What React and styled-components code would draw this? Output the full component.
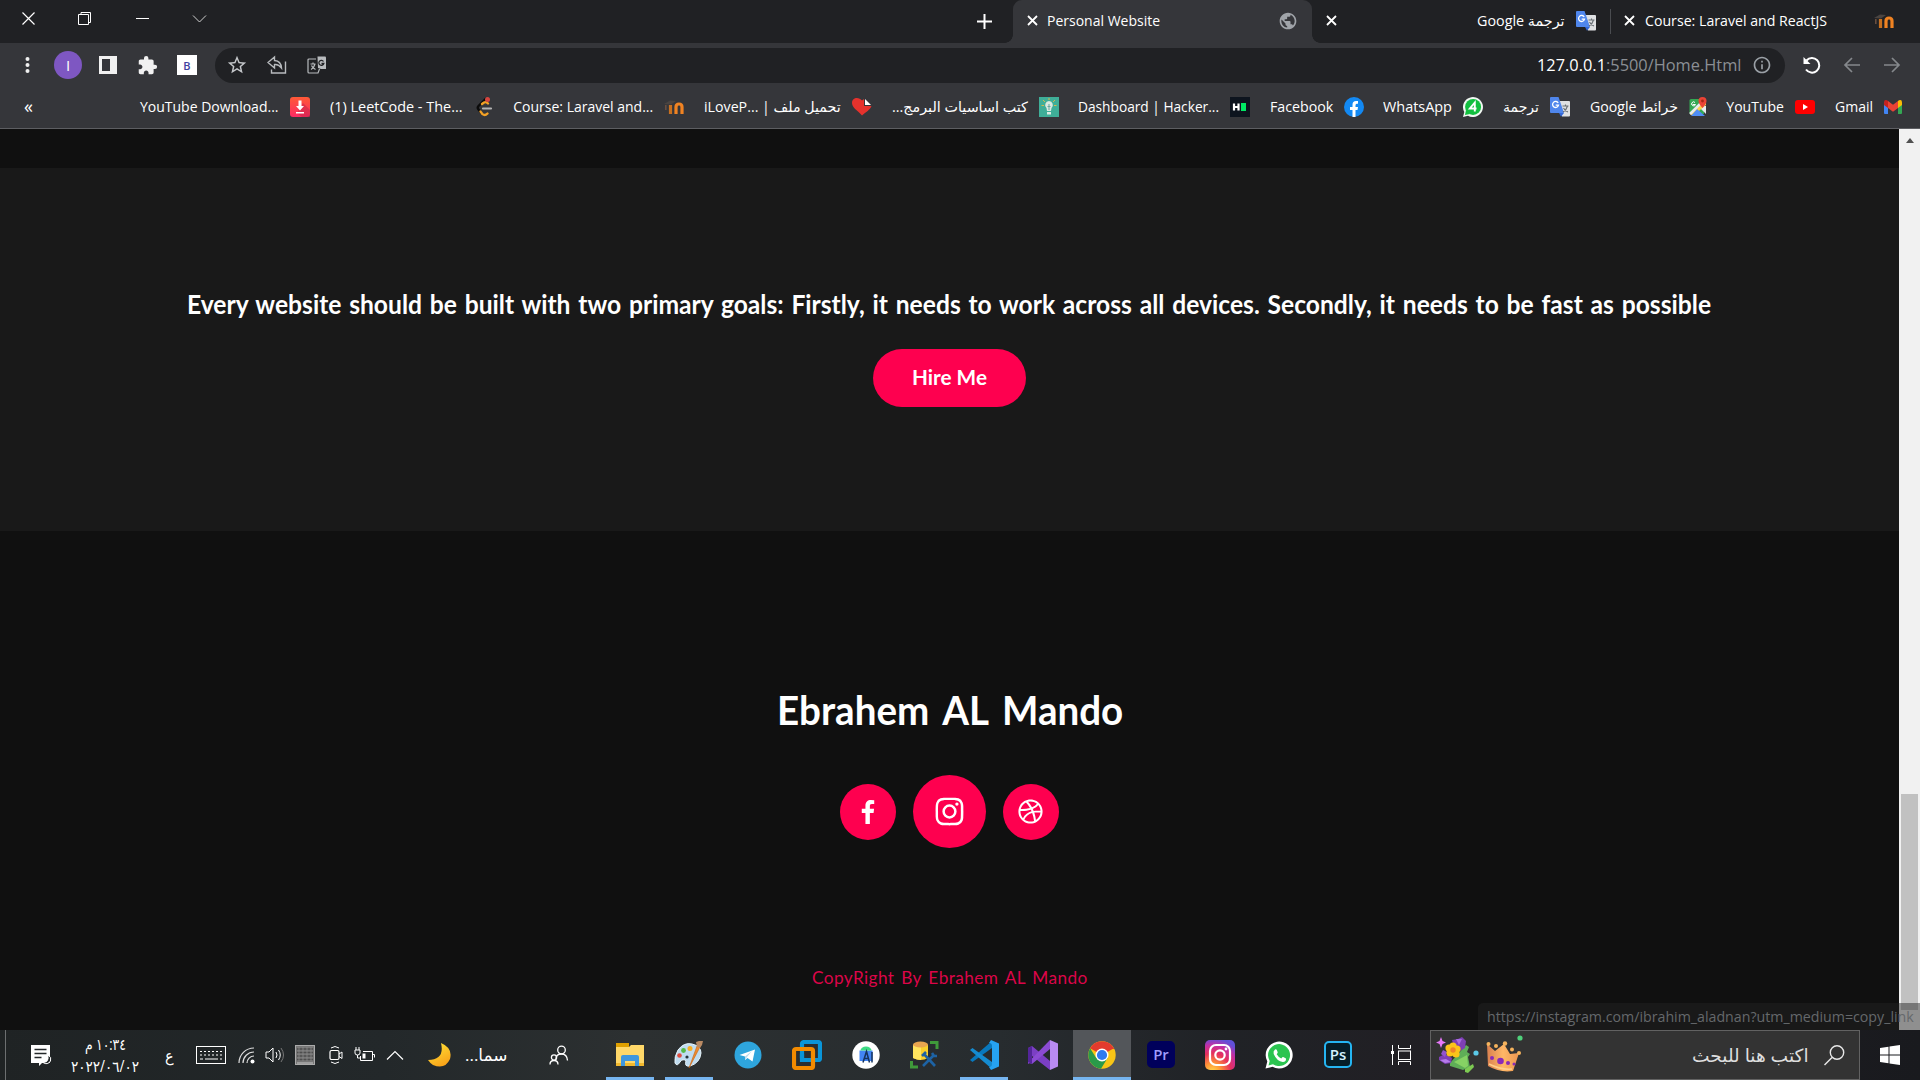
import React, { useLayoutEffect, useRef, useState } from "react";
import styled, { createGlobalStyle, css } from "styled-components";
import { BiLogoFacebook, BiLogoInstagram, BiLogoDribbble } from "react-icons/bi";
import { MdStarBorder, MdExtension, MdInfoOutline, MdPublic } from "react-icons/md";

const GlobalStyle = createGlobalStyle`
  * { box-sizing: border-box; }
  html, body { margin: 0; padding: 0; overflow: hidden; background: #101010; }
  svg { display: block; flex: none; }
`;

const ui = `"Open Sans", "Noto Sans", "DejaVu Sans", sans-serif`;
const brand = `Lato, "Open Sans", sans-serif`;

/* ---------- text that fills a known width ---------- */
const FitBox = styled.span`
  display: block;
  flex: none;
  width: ${(p) => p.$w}px;
  direction: ltr;
  white-space: nowrap;
`;
const FitInner = styled.span`
  display: inline-block;
  transform-origin: 0 50%;
`;
function Fit({ w, rtl, children }) {
  const ref = useRef(null);
  const [scale, setScale] = useState(1);
  useLayoutEffect(() => {
    if (ref.current) setScale(w / ref.current.offsetWidth);
  }, [w]);
  return (
    <FitBox $w={w}>
      <FitInner ref={ref} dir={rtl ? "rtl" : "ltr"} style={{ transform: `scaleX(${scale})` }}>
        {children}
      </FitInner>
    </FitBox>
  );
}

/* ---------- frame ---------- */
const Screen = styled.div`
  width: 1920px;
  height: 1080px;
  display: flex;
  flex-direction: column;
  overflow: hidden;
  font-family: ${ui};
  color: #fff;
`;
const TabStrip = styled.header`
  height: 43px;
  flex: none;
  display: flex;
  background: #202124;
`;
const WindowButtons = styled.div`
  width: 1005px;
  height: 43px;
  display: flex;
  align-items: center;
  padding-left: 21px;
`;
const WinIcon = styled.span`
  width: 15px;
  margin: 0 ${(p) => p.$mr}px 6px 0;
`;
const NewTab = styled.span`
  margin-left: auto;
  margin-right: 13px;
`;
const Tab = styled.div`
  height: 43px;
  width: ${(p) => p.$w}px;
  flex: none;
  display: flex;
  align-items: center;
  padding: 0 ${(p) => p.$pr}px 2px ${(p) => p.$pl}px;
  font-size: 14px;
  line-height: 20px;
  ${(p) =>
    p.$active &&
    css`
      background: #35363a;
      border-radius: 9px 9px 0 0;
    `}
`;
const TabCurve = styled.span`
  width: 8px;
  height: 8px;
  align-self: flex-end;
  flex: none;
  background: radial-gradient(circle at ${(p) => (p.$right ? "100% 0" : "0 0")}, #202124 7.5px, #35363a 8px);
`;
const TabTitle = styled.span`
  margin-left: ${(p) => p.$ml}px;
  margin-right: auto;
`;
const TabRule = styled.span`
  width: 1px;
  height: 25px;
  margin-top: 9px;
  background: #4a4c50;
  flex: none;
`;

const Toolbar = styled.div`
  height: 44px;
  flex: none;
  display: flex;
  align-items: center;
  padding-left: 24px;
  background: #35363a;
`;
const Tools = styled.div`
  width: 191px;
  display: flex;
  align-items: center;
`;
const Tool = styled.span`
  margin-right: ${(p) => p.$mr || 0}px;
  display: flex;
`;
const Avatar = styled.span`
  width: 28px;
  height: 28px;
  margin: 0 17px 0 23px;
  border-radius: 50%;
  background: #7e57c2;
  display: grid;
  place-items: center;
  font-size: 15px;
`;
const BBadge = styled.span`
  width: 20px;
  height: 20px;
  margin-left: 1px;
  background: #fff;
  color: #3f3f9f;
  display: grid;
  place-items: center;
  font-size: 11px;
  font-weight: 600;
`;
const Address = styled.div`
  width: 1570px;
  height: 35px;
  border-radius: 18px;
  background: #202124;
  display: flex;
  align-items: center;
  padding: 0 13px 0 11px;
  color: #c4c7ca;
  font-size: 17px;
  line-height: 24px;
`;
const Url = styled.span`
  margin-left: auto;
  margin-right: 11px;
  color: #8b8f94;
  b { color: #fff; font-weight: 400; }
`;
const NavIcons = styled.div`
  display: flex;
  align-items: center;
  gap: 20px;
  margin-left: 17px;
`;

const Bookmarks = styled.nav`
  height: 42px;
  flex: none;
  display: flex;
  align-items: center;
  justify-content: flex-end;
  gap: 19.65px;
  padding: 0 18px 2px 24px;
  background: #35363a;
  border-bottom: 1px solid #5d5e62;
  font-size: 14px;
  line-height: 20px;
`;
const More = styled.span`
  margin-right: auto;
  font-size: 18px;
  line-height: 20px;
  padding-bottom: 2px;
`;
const Bookmark = styled.span`
  display: flex;
  align-items: center;
  gap: 11px;
`;

/* ---------- page ---------- */
const Viewport = styled.div`
  position: relative;
  flex: 1;
  min-height: 0;
  display: flex;
  background: #101010;
`;
const Page = styled.main`
  width: 1899px;
  display: flex;
  flex-direction: column;
  font-family: ${brand};
`;
const Hire = styled.section`
  margin-top: 39px;
  height: 363px;
  flex: none;
  padding-top: 116px;
  background: #191919;
  display: flex;
  flex-direction: column;
  align-items: center;
`;
const Pitch = styled.h2`
  margin: 0 2px 0 0;
  font-size: 27.5px;
  line-height: 40px;
  font-weight: 700;
  word-spacing: 2px;
`;
const HireButton = styled.a`
  margin-top: 25px;
  width: 153px;
  height: 58px;
  border-radius: 30px;
  background: #fe004f;
  display: flex;
  align-items: center;
  justify-content: center;
  padding-bottom: 2px;
  font-size: 21px;
  line-height: 30px;
  font-weight: 700;
`;
const Footer = styled.footer`
  flex: 1;
  padding-top: 151px;
  display: flex;
  flex-direction: column;
  align-items: center;
`;
const Name = styled.h1`
  margin: 0;
  font-size: 40px;
  line-height: 56px;
  font-weight: 700;
  word-spacing: 5px;
`;
const Socials = styled.div`
  margin: 37px 1px 0 0;
  height: 73px;
  display: flex;
  align-items: center;
  gap: 17px;
`;
const Social = styled.a`
  width: ${(p) => p.$size}px;
  height: ${(p) => p.$size}px;
  border-radius: 50%;
  background: #fe004f;
  display: grid;
  place-items: center;
`;
const Copyright = styled.p`
  margin: 116px 0 0;
  font-size: 17px;
  line-height: 28px;
  letter-spacing: 0.4px;
  word-spacing: 2px;
  color: #dc0549;
`;
const Scrollbar = styled.div`
  width: 21px;
  background: #f1f1f1;
  display: flex;
  flex-direction: column;
  align-items: center;
`;
const Arrow = styled.span`
  margin-top: 9px;
  border: 4.5px solid transparent;
  border-top: 0;
  border-bottom: 5px solid #505050;
`;
const Thumb = styled.span`
  width: 17px;
  height: 216px;
  margin-top: 651px;
  background: #c1c1c1;
`;
const Status = styled.div`
  position: absolute;
  right: 0;
  bottom: 0;
  width: 442px;
  height: 27px;
  padding-left: 9px;
  border-top-left-radius: 5px;
  background: rgba(35, 35, 36, 0.48);
  color: #65686b;
  font-size: 14px;
  line-height: 27px;
  overflow: hidden;
`;

/* ---------- taskbar ---------- */
const Taskbar = styled.footer`
  height: 50px;
  flex: none;
  display: flex;
  align-items: center;
  background: linear-gradient(90deg, #1f2324 0, #23282a 20%, #2c3031 33%, #272c2f 52%, #202226 64%, #211f24 75%, #191a1e 100%);
`;
const Tray = styled.div`
  width: 601px;
  height: 50px;
  margin-left: 5px;
  margin-right: -5px;
  padding-left: 25px;
  border-left: 1px solid #6c6f70;
  display: flex;
  align-items: center;
`;
const TrayItem = styled.span`
  margin-left: ${(p) => p.$ml || 0}px;
  font-size: ${(p) => p.$fs || 15}px;
  line-height: 24px;
`;
const Clock = styled.div`
  margin-left: 19px;
  width: 68px;
  display: flex;
  flex-direction: column;
  align-items: center;
  font-size: 15.5px;
  line-height: 22px;
`;
const Apps = styled.div`
  display: flex;
  gap: 1px;
  width: 829px;
`;
const AppCell = styled.span`
  width: 58px;
  height: 50px;
  flex: none;
  display: flex;
  align-items: center;
  justify-content: center;
  padding-top: ${(p) => (p.$active ? 3 : 0)}px;
  padding-left: ${(p) => p.$shift || 0}px;
  background: ${(p) => (p.$active ? "#53565a" : "transparent")};
  border-bottom: ${(p) => (p.$active ? "3px solid #76b5f0" : "0")};
  ${(p) =>
    p.$open &&
    !p.$active &&
    css`
      background: linear-gradient(#76b5f0, #76b5f0) center bottom / 48px 3px no-repeat;
    `}
`;
const Tile = styled.span`
  width: 28px;
  height: 27px;
  border-radius: 5px;
  border: 2px solid ${(p) => p.$edge};
  background: ${(p) => p.$bg};
  color: ${(p) => p.$fg};
  display: grid;
  place-items: center;
  font: 600 15px/20px ${ui};
  margin-bottom: 2px;
`;
const Search = styled.div`
  width: 430px;
  height: 50px;
  border: 1px solid #626262;
  background: #333;
  display: flex;
  align-items: center;
  padding: 0 14px 0 4px;
  font-size: 18px;
  line-height: 26px;
  color: #dedede;
`;
const SearchText = styled.span`
  margin-left: auto;
  margin-right: 15px;
`;
const Start = styled.span`
  margin-left: 20px;
`;

/* ---------- drawings ---------- */
const Svg = ({ w = 20, h = w, vb = `0 0 ${w} ${h}`, children }) => (
  <svg width={w} height={h} viewBox={vb} fill="none" stroke="none">{children}</svg>
);
const CloseX = () => (
  <Svg w={11}><path d="M1 1l9 9M10 1l-9 9" stroke="#fff" strokeWidth="1.800" /></Svg>
);
const Moodle = () => (
  <Svg w={20}>
    <path d="M12 17V10q0-3 3-3t3 3v7" stroke="#f08322" strokeWidth="3.200" />
    <path d="M6.500 17V8" stroke="#c8701f" strokeWidth="3.200" />
    <path d="M0 7l6-3.500 6 .5-5 3.500z" fill="#4a4441" /><path d="M1.800 8v5" stroke="#6e5140" strokeWidth="1.500" />
  </Svg>
);
const Translate = () => (
  <Svg w={20}>
    <path d="M8 4h11q1 0 1 1v13.500q0 1-1 1h-7z" fill="#dfe1e3" />
    <path d="M1 0h7.500L14 16H1q-1 0-1-1V1q0-1 1-1z" fill="#4f86ec" />
    <path d="M9 16h5l-3 3.800z" fill="#3367d6" />
    <path d="M8.200 6A3 3 0 1 0 8.500 8.200H5.700" stroke="#fff" strokeWidth="1.300" />
    <path d="M12.500 9h6M15.500 7.500V9M17.500 9q-1 4-4.500 6M13.500 11q1.500 3 4.500 4" stroke="#6a7075" strokeWidth="1.100" />
  </Svg>
);
const Download = () => (
  <Svg w={20}>
    <defs><linearGradient id="dl" x2="0" y2="1"><stop stopColor="#ff5a36" /><stop offset="1" stopColor="#fb2a63" /></linearGradient></defs>
    <rect width="20" height="20" rx="3" fill="url(#dl)" />
    <path d="M13 6l7 7v7h-8l-5-4z" fill="#c92748" opacity=".55" />
    <path d="M8.500 3.500h3V9H14l-4 4.500L6 9h2.500zM6 15h8v1.500H6z" fill="#fff" />
  </Svg>
);
const Leet = () => (
  <Svg w={20}>
    <path d="M11.500 2L4.500 9q-1.500 1.800 0 3.500l2.500 3" stroke="#0b0b0b" strokeWidth="2.400" strokeLinecap="round" />
    <path d="M6.500 14.500l2 2.700q2.500 2 5-.7M8 7l2-1.500q2-1 4 1" stroke="#f3a125" strokeWidth="2.300" strokeLinecap="round" />
    <path d="M9 11.500h8" stroke="#b3b3b3" strokeWidth="2.200" strokeLinecap="round" /><circle cx="13.500" cy="2.500" r="2.500" fill="#d6453f" />
  </Svg>
);
const LovePdf = () => (
  <Svg w={20}>
    <path d="M10 18.500C5 13 0 10.500 0 6 0 0 7-.5 10 3.500L12 2v7h7.500C18 13 14 15 10 18.500z" fill="#e5322d" /><path d="M13 2l6 6h-6z" fill="#fff" />
  </Svg>
);
const Bulb = () => (
  <Svg w={20}>
    <rect width="20" height="20" fill="#3fae98" /><path d="M4 3l2 2M16 3l-2 2M2.500 8.500H5M15 8.500h2.500M10 1v2" stroke="#d5b84e" />
    <path d="M10 4a4 4 0 0 1 2.500 7L12 14H8l-.5-3A4 4 0 0 1 10 4zM8 15h4v2.500H8z" fill="#dce9e1" /><path d="M10 7v6M8.500 9.500H11.500" stroke="#65a7a2" />
  </Svg>
);
const Hacker = () => (
  <Svg w={20}>
    <rect width="20" height="20" fill="#0d141e" /><path d="M4 6.500v7M8.500 6.500v7M4 10h4.500" stroke="#fff" strokeWidth="2.200" />
    <rect x="11" y="6" width="5" height="8" fill="#00ea64" />
  </Svg>
);
const Facebook = () => (
  <Svg w={20}>
    <circle cx="10" cy="10" r="10" fill="#1389f3" /><path d="M8.500 20v-7H6v-3h2.500V7.700Q8.500 4 12 4h2v2.700h-1.300q-1.200 0-1.200 1.500V10h2.500l-.5 3h-2v7z" fill="#fff" />
  </Svg>
);
const Wa4 = () => (
  <Svg w={20}>
    <path d="M0 20l1.300-5A10 10 0 1 1 5 18.700z" fill="#f2f7f3" /><circle cx="10.100" cy="9.900" r="8" fill="#12bf3f" /><path d="M3 13l-1 5 5-1z" fill="#12bf3f" />
    <path d="M11.800 14.500V5.500L6.800 11.500h6.700" stroke="#fff" strokeWidth="1.900" />
  </Svg>
);
const Maps = () => (
  <Svg w={18} h={20}>
    <path d="M2 2h13v15H2q-1.500 0-1.500-1.500v-12Q.5 2 2 2z" fill="#34a853" /><path d="M17 9v8L9 9z" fill="#e8eaed" />
    <path d="M1 17L15 3l2 2v3L4 19z" fill="#fbd04b" /><path d="M8 12l8 7H2z" fill="#4f8df5" /><path d="M1 17L13 5" stroke="#e8eaed" strokeWidth="2.500" />
    <path d="M13.500 11Q9.500 6.500 9.500 4a4 4 0 0 1 8 0q0 2.500-4 7z" fill="#ea4335" /><circle cx="13.500" cy="4" r="1.400" fill="#a52714" />
    <path d="M3.500 7.500h3A2 2 0 1 1 6 5.500" stroke="#fff" />
  </Svg>
);
const YouTube = () => (
  <Svg w={20}><rect y="3" width="20" height="14" rx="3" fill="#f00" /><path d="M8 7l5 3-5 3z" fill="#fff" /></Svg>
);
const Gmail = () => (
  <Svg w={18} h={14}>
    <path d="M0 1.500V13q0 1 1 1h3V5z" fill="#4285f4" /><path d="M18 1.500V13q0 1-1 1h-3V5z" fill="#34a853" />
    <path d="M4 8V1l5 3.700L14 1v7l-5 3.700z" fill="#ea4335" /><path d="M0 2.500Q0-.8 3 .3L4 1v7L0 5z" fill="#c5221f" /><path d="M18 2.500Q18-.8 15 .3L14 1v7l4-3z" fill="#fbbc04" />
  </Svg>
);
const Bouquet = () => (
  <Svg w={44} h={40}>
    <path d="M6 2l1.500 4L11 7.500 7.500 9 6 13 4.500 9 1 7.500 4.500 6z" fill="#e879f9" />
    <path d="M15 28L31 10l3 2-2 5 3 2-2 3 2 10-7 3-13-4z" fill="#5fae57" /><path d="M19 27l13-7 1 11-3 2z" fill="#86d264" />
    <path d="M30 34l8-5 1 3-6 6-3-1z" fill="#7dca52" />
    <path d="M17 5l6-1 4-2 4 4-1 7-5 3-6-4z" fill="#7e3fb5" /><path d="M4 22l6-3 7 4-1 5-6 1-6-4z" fill="#7e3fb5" /><path d="M5 25l6-1 5 3-6 1z" fill="#b57bea" /><path d="M21 4h6l-3 6z" fill="#a66be0" /><path d="M8 15l4 2-2 5-4-3z" fill="#9253cf" />
    <g fill="#fcc419"><circle cx="18" cy="11" r="3.600" /><circle cx="22" cy="14" r="3.600" /><circle cx="21" cy="19" r="3.600" /><circle cx="15" cy="18" r="3.600" /><circle cx="14" cy="13" r="3.600" /></g>
    <circle cx="18" cy="15" r="2.700" fill="#f08428" /><circle cx="41" cy="18" r="2.600" fill="#5bc9e8" />
  </Svg>
);
const Crown = () => (
  <Svg w={38} h={40}>
    <defs><linearGradient id="cr" x2="1"><stop stopColor="#d98050" /><stop offset=".5" stopColor="#ffb766" /><stop offset="1" stopColor="#ec9650" /></linearGradient></defs>
    <path d="M1 9l8 7 9-7 6 10 9-1-6 18q-13 2-25-5z" fill="url(#cr)" />
    <g fill="#f5b35d"><circle cx="2.500" cy="9" r="2" /><circle cx="10" cy="11" r="2" /><circle cx="19" cy="8.500" r="2.200" /><circle cx="26" cy="14.500" r="2" /><circle cx="33" cy="18" r="2" /></g>
    <path d="M3 29q12 6 23 5" stroke="#ffd08b" strokeWidth="1.500" />
    <g fill="#8a2bb8"><circle cx="6" cy="23" r="2" /><circle cx="14.500" cy="26" r="3.300" /><circle cx="22" cy="28" r="2" /><circle cx="28" cy="29" r="1.500" /></g>
    <circle cx="34" cy="3" r="2.600" fill="#4fd17b" />
  </Svg>
);
const Folder = () => (
  <Svg w={28} h={26}>
    <path d="M0 1h13v4H0z" fill="#dfa000" /><path d="M0 5h13l2-2h13v21H0z" fill="#ffd869" /><path d="M0 21h28v3H0z" fill="#f1b82e" />
    <path d="M5 24V15q0-2 2-2h14q2 0 2 2v9h-4v-5H9v5z" fill="#3f97dd" />
  </Svg>
);
const Paint = () => (
  <Svg w={30} h={30}>
    <path d="M1 23Q0 17 4 10 10 2 18 4q9 2 9 9-1 10-11 13-6 1-4-5-3-3-6 1-3 5-5 1z" fill="#bfdcf0" stroke="#e7f4fb" />
    <circle cx="5.500" cy="15.500" r="2.300" fill="#df4c3e" /><circle cx="9.500" cy="10.500" r="2.400" fill="#56b947" /><circle cx="16" cy="8.500" r="2.500" fill="#f7ae26" /><circle cx="13" cy="17" r="1.600" fill="#27343b" />
    <path d="M15 28L23 6l3 1z" fill="#ee8a2e" stroke="#c56518" strokeWidth=".6" /><path d="M23 7l-1-5 3-1 4 0-1 4-2 3z" fill="#b98a63" />
  </Svg>
);
const Telegram = () => (
  <Svg w={28}><circle cx="14" cy="14" r="13.500" fill="#2ea5dd" /><path d="M5.500 14L21 8.500l-2.500 12-5-3.500-2.500 2v-3.500z" fill="#fff" /><path d="M11 15.500l7-5.500-5 6-2 3z" fill="#b9dbee" /></Svg>
);
const VMware = () => (
  <Svg w={30}>
    <rect x="10" y="2" width="18" height="18" rx="2" stroke="#0a95d8" strokeWidth="4.200" />
    <rect x="2" y="9" width="19" height="19" rx="2" stroke="#f38b00" strokeWidth="4.200" /><path d="M10 14v6h7" stroke="#0a95d8" strokeWidth="4.200" />
  </Svg>
);
const Studio = () => (
  <Svg w={28}>
    <circle cx="14" cy="14" r="13.700" fill="#fff" /><path d="M7.500 9.500h13V20h-13z" fill="#4285f4" /><path d="M8.500 9.500a5.500 4 0 0 1 11 0z" fill="#3ddc84" />
    <path d="M11 21.500l3.500-11 3 11M12 17.500h5M20 11v10.500" stroke="#16335c" strokeWidth="1.500" />
  </Svg>
);
const Database = () => (
  <Svg w={30}>
    <path d="M3 5v13q8 4 15 0V5z" fill="#f9d02c" /><path d="M3 5v13q4 2 8 2V7z" fill="#ffe45e" /><ellipse cx="10.500" cy="4.500" rx="7.500" ry="3" fill="#e9a54f" />
    <path d="M20 2.500h7V9M1.500 21v6H8" stroke="#3f9a3a" strokeWidth="3" /><path d="M14 14l11 12M13 26l10-10M12 16l4-4M22 13l2 3 3 0" stroke="#1d63a5" strokeWidth="2.600" />
  </Svg>
);
const VsCode = () => (
  <Svg w={30}>
    <path d="M1 20l2.500 2L23 8V1z" fill="#0878bd" /><path d="M1 10l2.500-2L23 22v7z" fill="#158bd0" />
    <path d="M22 0l8 3.500v23L22 30l-2-3q3 0 3-3V6q0-3-3-3z" fill="#26a3f2" />
  </Svg>
);
const VisualStudio = () => (
  <Svg w={30}>
    <path d="M0 8l4-2L22 21v9L4 16v6L0 24z" fill="#7b3fc4" /><path d="M0 22.500L22 0v9L4 24z" fill="#8b4bd3" />
    <path d="M0 8l4-2v18l-4-2z" fill="#54259a" /><path d="M22 0l8 3.500v23L22 30z" fill="#b98bf3" />
  </Svg>
);
const Chrome = () => (
  <Svg w={28}>
    <circle cx="14" cy="14" r="13.700" fill="#f8c516" /><path d="M14 14L2.100 7.200A13.700 13.700 0 0 1 25.900 7.200z" fill="#e33b2e" /><path d="M14 8h11.900v-.8L14 2 2.100 7.200z" fill="#e33b2e" />
    <path d="M2.100 7.200A13.700 13.700 0 0 0 13 27.650L19.600 17 14 14 8.400 17.200z" fill="#2a9a49" /><circle cx="14" cy="14" r="6.500" fill="#fff" /><circle cx="14" cy="14" r="5.100" fill="#2f7af0" />
  </Svg>
);
const InstaApp = () => (
  <Svg w={30}>
    <defs>
      <radialGradient id="ig" cx=".25" cy="1.050" r="1.100"><stop stopColor="#ffd94f" /><stop offset=".25" stopColor="#ff9637" /><stop offset=".55" stopColor="#e6305c" /><stop offset=".8" stopColor="#c32fa5" /><stop offset="1" stopColor="#6150d8" /></radialGradient>
    </defs>
    <rect width="30" height="30" rx="5" fill="url(#ig)" /><rect x="5" y="5" width="20" height="20" rx="6" stroke="#fff" strokeWidth="2.200" /><circle cx="15" cy="15" r="4.700" stroke="#fff" strokeWidth="2.200" /><circle cx="21" cy="9" r="1.400" fill="#fff" />
  </Svg>
);
const WhatsApp = () => (
  <Svg w={28}>
    <path d="M.5 27.500l1.800-7A13.500 13.500 0 1 1 7.500 25.800z" fill="#fff" /><path d="M3.500 24.500l1.200-4.600A11 11 0 1 1 8 23.300z" fill="#2bc450" />
    <path d="M10 8.500q1-.8 1.700.3l1 2.500q.2.700-1 1.900 1.600 2.900 4.600 4.200 1.300-1.700 1.900-1.400l2.800 1.400q.4 3.100-3.200 3.500Q12 20.500 8.700 13q-.8-3 1.300-4.500z" fill="#fff" />
  </Svg>
);
const TaskView = () => (
  <Svg w={20}>
    <path d="M1.500 0v20M7.500 0v3.500h12V0M7.500 20v-3.500h12V20" stroke="#fff" /><rect x="7.500" y="6" width="12" height="8.500" stroke="#fff" /><rect y="6" width="3" height="3" fill="#fff" />
  </Svg>
);

const bookmarks = [
  ["YouTube Download...", 139, Download], ["(1) LeetCode - The...", 133, Leet], ["Course: Laravel and...", 140, Moodle],
  ["iLoveP... | تحميل ملف", 137, LovePdf], ["كتب اساسيات البرمج...", 136, Bulb, true], ["Dashboard | Hacker...", 141, Hacker],
  ["Facebook", 63, Facebook], ["WhatsApp", 69, Wa4], ["ترجمة", 36, Translate, true], ["خرائط Google", 88, Maps, true],
  ["YouTube", 58, YouTube], ["Gmail", 38, Gmail],
];

const apps = [
  [Folder, true], [Paint, true], [Telegram], [VMware], [Studio], [Database], [VsCode, true], [VisualStudio], [Chrome, true, true],
  [() => <Tile $bg="#00005b" $edge="#00005b" $fg="#9f9dff">Pr</Tile>], [InstaApp], [WhatsApp],
  [() => <Tile $bg="#061e28" $edge="#25b5f2" $fg="#d4f1ff">Ps</Tile>],
];

export default function App() {
  return (
    <Screen>
      <GlobalStyle />
      <TabStrip>
        <WindowButtons>
          <WinIcon $mr={41}><Svg w={15}><path d="M1.500 1.500l12 12M13.500 1.500l-12 12" stroke="#fff" strokeWidth="1.200" /></Svg></WinIcon>
          <WinIcon $mr={43}><Svg w={15}><path d="M1.500 3.500h10v10h-10zM4 3.500v-2h9.500v10h-2" stroke="#fff" /></Svg></WinIcon>
          <WinIcon $mr={42}><Svg w={15}><path d="M1 7.500h13" stroke="#fff" /></Svg></WinIcon>
          <WinIcon $mr={0}><Svg w={15}><path d="M1 4.500l6.500 6.500L14 4.500" stroke="#d0d0d0" /></Svg></WinIcon>
          <NewTab><Svg w={15}><path d="M7.500 0v15M0 7.500h15" stroke="#fff" strokeWidth="2" /></Svg></NewTab>
        </WindowButtons>
        <TabCurve />
        <Tab $active $w={299} $pl={14} $pr={14}>
          <CloseX />
          <TabTitle $ml={9}><Fit w={113}>Personal Website</Fit></TabTitle>
          <MdPublic size={20} color="#a0a4a9" />
        </Tab>
        <TabCurve $right />
        <Tab $w={290} $pl={6} $pr={14}>
          <CloseX />
          <TabTitle $ml={140}><Fit w={88} rtl>ترجمة Google</Fit></TabTitle>
          <Translate />
        </Tab>
        <TabRule />
        <Tab $w={308} $pl={13} $pr={25}>
          <CloseX />
          <TabTitle $ml={10}><Fit w={182}>Course: Laravel and ReactJS</Fit></TabTitle>
          <Moodle />
        </Tab>
      </TabStrip>

      <Toolbar>
        <Tools>
          <Tool><Svg w={7} h={18}><g fill="#f0f0f0"><circle cx="3.500" cy="3" r="2" /><circle cx="3.500" cy="9" r="2" /><circle cx="3.500" cy="15" r="2" /></g></Svg></Tool>
          <Avatar>I</Avatar>
          <Tool $mr={20}><Svg w={18}><path d="M0 0h18v18H0zM3 3v12h8V3z" fillRule="evenodd" fill="#f1f1f1" /></Svg></Tool>
          <Tool $mr={18}><MdExtension size={21} color="#f1f1f1" /></Tool>
          <BBadge>B</BBadge>
        </Tools>
        <Address>
          <Tool $mr={19}><MdStarBorder size={22} /></Tool>
          <Tool $mr={20}><Svg w={20}><path d="M1 7.500L7.500 2v3.500Q14 6 14.500 13 11.500 9 7.500 9.500V13zM4.500 14.500v3.500H18.500V6.500" stroke="#b8bbbe" strokeWidth="1.400" /></Svg></Tool>
          <Tool><Svg w={20}>
            <path d="M10.500 1.500h7.500q1 0 1 1v11.500h-5l-3-1z" fill="#b8bbbe" /><path d="M9 4H2q-1 0-1 1v12q0 1 1 1h9l1.500-4M3.500 9h5M6 7.500V9M8 9q-1 4-4 5.500M4.500 10.500q1 2.500 4 4" stroke="#b8bbbe" strokeWidth="1.200" />
            <path d="M16.500 6.500A2.500 2.500 0 1 0 16.800 8.500H14.500" stroke="#202124" strokeWidth="1.300" />
          </Svg></Tool>
          <Url><Fit w={204}><b>127.0.0.1</b>:5500/Home.Html</Fit></Url>
          <MdInfoOutline size={20} color="#9aa0a6" />
        </Address>
        <NavIcons>
          <Svg w={20}><path d="M4.500 5.500A7.300 7.300 0 1 1 4 14.500" stroke="#fff" strokeWidth="2" /><path d="M1.500 2v7h7z" fill="#fff" /></Svg>
          <Svg w={20}><path d="M18 10H3M10 3l-7 7 7 7" stroke="#85888c" strokeWidth="1.700" /></Svg>
          <Svg w={20}><path d="M2 10h15M10 3l7 7-7 7" stroke="#85888c" strokeWidth="1.700" /></Svg>
        </NavIcons>
      </Toolbar>

      <Bookmarks>
        <More>«</More>
        {bookmarks.map(([label, w, Icon, rtl]) => (
          <Bookmark key={label}><Fit w={w} rtl={rtl}>{label}</Fit><Icon /></Bookmark>
        ))}
      </Bookmarks>

      <Viewport>
        <Page>
          <Hire>
            <Pitch><Fit w={1524}>Every website should be built with two primary goals: Firstly, it needs to work across all devices. Secondly, it needs to be fast as possible</Fit></Pitch>
            <HireButton><Fit w={75}>Hire Me</Fit></HireButton>
          </Hire>
          <Footer>
            <Name><Fit w={346}>Ebrahem AL Mando</Fit></Name>
            <Socials>
              <Social $size={56}><BiLogoFacebook size={32} /></Social>
              <Social $size={73}><BiLogoInstagram size={37} /></Social>
              <Social $size={56}><BiLogoDribbble size={29} /></Social>
            </Socials>
            <Copyright><Fit w={276}>CopyRight By Ebrahem AL Mando</Fit></Copyright>
          </Footer>
        </Page>
        <Scrollbar><Arrow /><Thumb /></Scrollbar>
        <Status><Fit w={427}>https://instagram.com/ibrahim_aladnan?utm_medium=copy_link</Fit></Status>
      </Viewport>

      <Taskbar>
        <Tray>
          <Svg w={21}>
            <path d="M0 0h19v18h-8l-3 3v-3H0z" fill="#fff" /><path d="M3.500 4.500h12M3.500 8.500h12M3.500 12.500h7" stroke="#24282a" strokeWidth="1.400" />
            <path d="M17 10q4 2 2.500 6-3 4.500-7.500 1.500 4.500 0 5-3.500z" fill="#24282a" stroke="#fff" />
          </Svg>
          <Clock><Fit w={41} rtl>١٠:٣٤ م</Fit><Fit w={68}>٢٠٢٢/٠٦/٠٢</Fit></Clock>
          <TrayItem $ml={26} $fs={16}><Fit w={9} rtl>ع</Fit></TrayItem>
          <TrayItem $ml={22}><Svg w={30} h={18}><rect x=".5" y=".5" width="29" height="17" stroke="#fff" /><path d="M4 5.500h22M4 9h22" stroke="#fff" strokeDasharray="2 2" /><path d="M4 13h3M9 13h13M24 13h2" stroke="#fff" /></Svg></TrayItem>
          <TrayItem $ml={12}><Svg w={17}><path d="M1 16A15 15 0 0 1 16 1M5 16A11 11 0 0 1 16 5M9 16a7 7 0 0 1 7-7" stroke="#ddd" strokeWidth="1.200" /><circle cx="14.500" cy="14.500" r="2" fill="#fff" /></Svg></TrayItem>
          <TrayItem $ml={10}><Svg w={21} h={18}><path d="M1 6h3l4-4v14l-4-4H1z" stroke="#fff" /><path d="M11 6q2 3 0 6M13.500 4q3.500 5 0 10" stroke="#fff" /><path d="M16 2q5 7 0 14" stroke="#777" /></Svg></TrayItem>
          <TrayItem $ml={9}><Svg w={20}><rect x=".5" y=".5" width="19" height="19" fill="#777" stroke="#aaa" /><path d="M2 4h16M2 7.500h16M2 11h16M2 14.500h16" stroke="#4e4e4e" strokeWidth="1.400" /><path d="M4 2v14M8 2v14M12 2v14M16 2v14" stroke="#8b8b8b" strokeWidth=".8" /><path d="M2 18h16" stroke="#c5c5c5" /></Svg></TrayItem>
          <TrayItem $ml={13}><Svg w={16} h={20}><rect x="2" y="5.500" width="9" height="9" rx="1.500" stroke="#fff" strokeWidth="1.200" /><path d="M11 9l3-2v6.500l-3-2M3 3q4-3 8 0M3 17q4 3 8 0" stroke="#fff" /></Svg></TrayItem>
          <TrayItem $ml={10}><Svg w={21} h={16}><path d="M9 4.500h9.500v9H6.500V9M18.500 7.500h2v3" stroke="#fff" /><path d="M8.500 6.500h3v5h-3z" fill="#fff" /><path d="M2 0v3M5 0v3M1 3h5v3q0 2-2.500 2T1 6zM3.500 8v3H6" stroke="#fff" /></Svg></TrayItem>
          <TrayItem $ml={11}><Svg w={18} h={12}><path d="M1 10.500l8-8 8 8" stroke="#fff" strokeWidth="1.200" /></Svg></TrayItem>
          <TrayItem $ml={24}><Svg w={24}><defs><linearGradient id="mn" x2=".5" y2="1"><stop stopColor="#ffe93b" /><stop offset="1" stopColor="#f9a51a" /></linearGradient></defs><path d="M13 0Q25 5 22 16q-5 11-17 6-3-2-5-5 17 0 13-17z" fill="url(#mn)" /></Svg></TrayItem>
          <TrayItem $ml={13} $fs={16.5}><Fit w={42} rtl>سما...</Fit></TrayItem>
          <TrayItem $ml={42}><Svg w={20}><circle cx="12.500" cy="5" r="3.800" stroke="#fff" strokeWidth="1.300" /><path d="M7 14q0-5 5.500-5t6 6.500" stroke="#fff" strokeWidth="1.300" /><circle cx="5" cy="12.500" r="2.600" stroke="#fff" strokeWidth="1.300" /><path d="M1 19.500q0-4 4-4t4 4" stroke="#fff" strokeWidth="1.300" /></Svg></TrayItem>
        </Tray>
        <Apps>
          {apps.map(([Icon, open, active], i) => (
            <AppCell key={i} $open={open} $active={active}><Icon /></AppCell>
          ))}
          <AppCell $shift={8}><TaskView /></AppCell>
        </Apps>
        <Search>
          <Bouquet />
          <TrayItem $ml={7}><Crown /></TrayItem>
          <SearchText><Fit w={117} rtl>اكتب هنا للبحث</Fit></SearchText>
          <Svg w={21}><circle cx="13" cy="7.500" r="6.700" stroke="#e8e8e8" strokeWidth="1.400" /><path d="M8 12.500L.5 20" stroke="#e8e8e8" strokeWidth="1.500" /></Svg>
        </Search>
        <Start><Svg w={20}><path d="M0 3l8.500-1.200v7.700H0zM9.500 1.600L20 0v9.500H9.500zM0 10.500h8.500v7.700L0 17zM9.500 10.500H20V20L9.500 18.400z" fill="#fff" /></Svg></Start>
      </Taskbar>
    </Screen>
  );
}
